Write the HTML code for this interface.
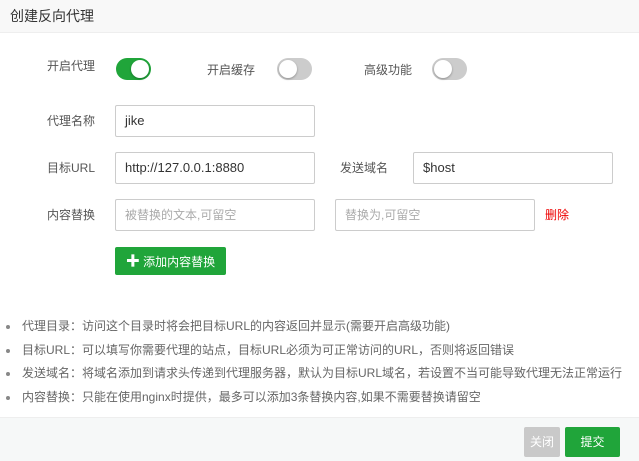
<!DOCTYPE html>
<html><head><meta charset="utf-8"><style>
*{box-sizing:border-box;margin:0;padding:0}
body{width:639px;height:461px;overflow:hidden;background:#fff;font-family:"Liberation Sans","Noto Sans CJK SC",sans-serif;font-size:12px;color:#555;position:relative}
.hd{position:absolute;left:0;top:0;width:639px;height:33px;background:#f8f8f8;border-bottom:1px solid #eee;font-size:14px;color:#333;line-height:32px;padding-left:10px}
.lb{position:absolute;font-size:12px;color:#555;line-height:16px}
.tg{position:absolute;width:35px;height:22px;border-radius:11px;background:#ccc}
.tg::after{content:"";position:absolute;top:2px;left:2px;width:18px;height:18px;border-radius:50%;background:#fff;box-shadow:0 1px 2px rgba(0,0,0,.3)}
.tg.on{background:#20a53a}.tg.on::after{left:15px}
.in{position:absolute;height:32px;border:1px solid #ccc;border-radius:2px;padding-left:9px;line-height:30px;font-size:13px;color:#333}
.ph{color:#aaa;font-size:12px}
.btn{position:absolute;left:115px;top:247px;width:111px;height:28px;background:#20a53a;border-radius:2px;color:#fff;font-size:12px;line-height:28px;text-align:center}
ul{position:absolute;left:0;top:318px;list-style:none}
li{position:relative;padding-left:22px;height:23.5px;line-height:16px;font-size:12px;color:#666;white-space:nowrap}
li::before{content:"";position:absolute;left:6px;top:7px;width:4px;height:4px;border-radius:50%;background:#888}
.ft{position:absolute;left:0;top:417px;width:639px;height:44px;background:#f6f8f8;border-top:1px solid #eee}
.b2{position:absolute;top:427px;height:30px;border-radius:2px;color:#fff;font-size:12px;line-height:30px;text-align:center}
</style></head><body>
<div class="hd">创建反向代理</div>
<div class="lb" style="left:47px;top:58px">开启代理</div>
<div class="tg on" style="left:116px;top:58px"></div>
<div class="lb" style="left:207px;top:62px">开启缓存</div>
<div class="tg" style="left:277px;top:58px"></div>
<div class="lb" style="left:364px;top:62px">高级功能</div>
<div class="tg" style="left:432px;top:58px"></div>
<div class="lb" style="left:47px;top:113px">代理名称</div>
<div class="in" style="left:115px;top:105px;width:200px">jike</div>
<div class="lb" style="left:47px;top:160px">目标URL</div>
<div class="in" style="left:115px;top:152px;width:200px">http://127.0.0.1:8880</div>
<div class="lb" style="left:340px;top:160px">发送域名</div>
<div class="in" style="left:413px;top:152px;width:200px">$host</div>
<div class="lb" style="left:47px;top:207px">内容替换</div>
<div class="in ph" style="left:115px;top:199px;width:200px">被替换的文本,可留空</div>
<div class="in ph" style="left:335px;top:199px;width:200px">替换为,可留空</div>
<div class="lb" style="left:545px;top:207px;color:#e00">删除</div>
<div class="btn"><b style="font-size:14px">✚</b> 添加内容替换</div>
<ul>
<li>代理目录：访问这个目录时将会把目标URL的内容返回并显示(需要开启高级功能)</li>
<li>目标URL：可以填写你需要代理的站点，目标URL必须为可正常访问的URL，否则将返回错误</li>
<li>发送域名：将域名添加到请求头传递到代理服务器，默认为目标URL域名，若设置不当可能导致代理无法正常运行</li>
<li>内容替换：只能在使用nginx时提供，最多可以添加3条替换内容,如果不需要替换请留空</li>
</ul>
<div class="ft"></div>
<div class="b2" style="left:524px;width:36px;background:#c9c9c9">关闭</div>
<div class="b2" style="left:565px;width:55px;background:#20a53a">提交</div>
</body></html>
